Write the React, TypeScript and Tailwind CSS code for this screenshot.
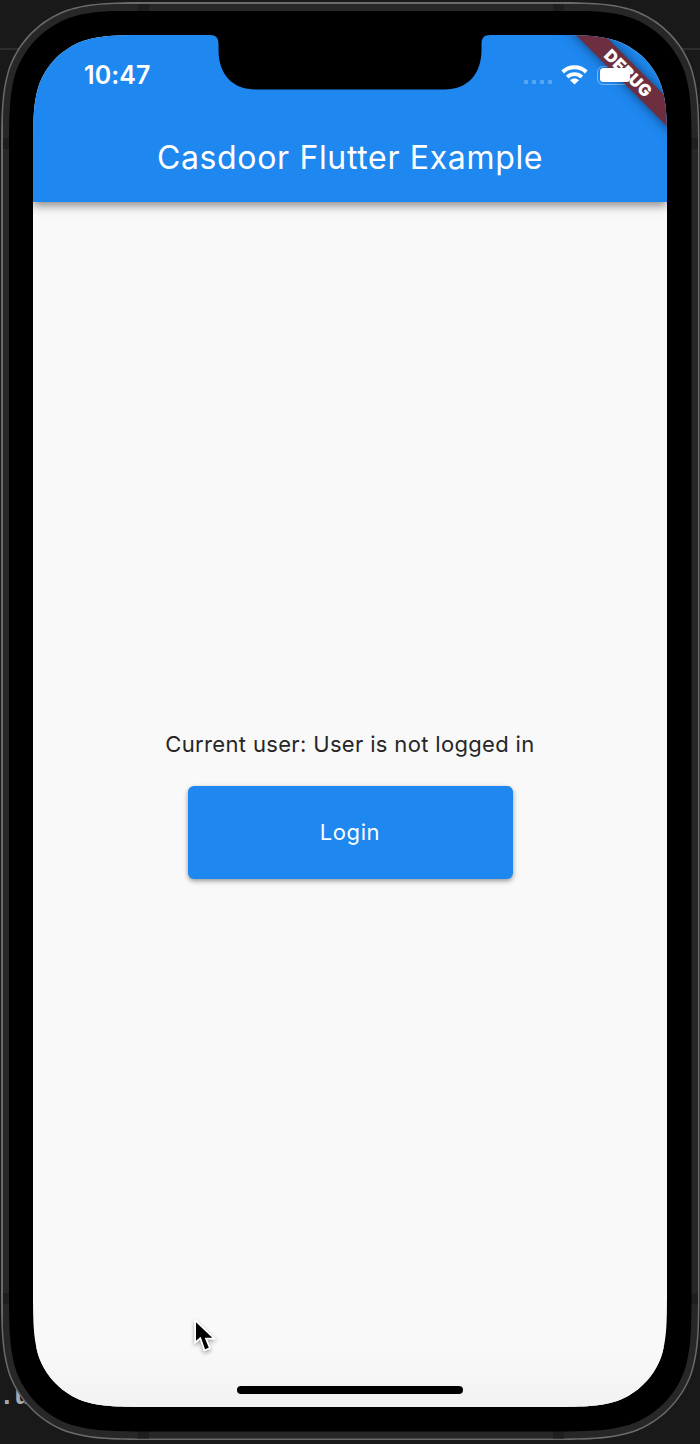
import React from "react";

/** Continuous-curvature rounded rectangle, returned as a CSS clip path. */
function smoothRect(w: number, h: number, r: number): string {
  const a = 1.528665 * r;
  const b = 1.088493 * r;
  const c = 0.868407 * r;
  const d = 0.631494 * r;
  const e = 0.074911 * r;
  const f = 0.372824 * r;
  const g = 0.169059 * r;
  return `path("M${a} 0H${w - a}C${w - b} 0 ${w - c} 0 ${w - d} ${e}C${w - f} ${g} ${w - g} ${f} ${w - e} ${d}C${w} ${c} ${w} ${b} ${w} ${a}V${h - a}C${w} ${h - b} ${w} ${h - c} ${w - e} ${h - d}C${w - g} ${h - f} ${w - f} ${h - g} ${w - d} ${h - e}C${w - c} ${h} ${w - b} ${h} ${w - a} ${h}H${a}C${b} ${h} ${c} ${h} ${d} ${h - e}C${f} ${h - g} ${g} ${h - f} ${e} ${h - d}C0 ${h - c} 0 ${h - b} 0 ${h - a}V${a}C0 ${b} 0 ${c} ${e} ${d}C${g} ${f} ${f} ${g} ${d} ${e}C${c} 0 ${b} 0 ${a} 0Z")`;
}

function Notch() {
  return (
    <svg className="absolute left-[177px] top-0" width="280" height="56" viewBox="0 0 280 56">
      <path
        d="M0 0C6 0 8.5 3 8.5 9V15C8.500 39 22 54.500 46 54.500H234C258 54.500 271.500 39 271.500 15V9C271.500 3 274 0 280 0Z"
        fill="#000"
      />
    </svg>
  );
}

function StatusBar() {
  return (
    <div className="flex h-[80px] items-center justify-between pl-[51px]">
      <span className="mt-[1px] text-[25px] font-semibold leading-none tracking-[0.1px]">10:47</span>
      <div className="flex items-center pr-[33px]">
        <div className="mr-[9px] mt-[13px] flex gap-[4px]">
          <i className="size-[4px] rounded-[1px] bg-white/25" />
          <i className="size-[4px] rounded-[1px] bg-white/25" />
          <i className="size-[4px] rounded-[1px] bg-white/25" />
          <i className="size-[4px] rounded-[1px] bg-white/25" />
        </div>
        <svg width="27" height="20" viewBox="0 0 27 20" fill="none" stroke="#fff" strokeWidth="3.9">
          <path d="M1.700 7C8.300 .7 18.700 .7 25.300 7" />
          <path d="M6.200 12C10.300 8.100 16.700 8.100 20.800 12" />
          <path d="M13.500 19.500L9 15.200C11.600 12.800 15.400 12.800 18 15.200Z" fill="#fff" stroke="none" />
        </svg>
        <div className="ml-[9px] h-[19px] w-[37px] rounded-[6px] border border-white/40" />
      </div>
    </div>
  );
}

function DebugBanner() {
  return (
    <div className="absolute left-[505px] top-[28px] flex h-[20px] w-[180px] rotate-45 items-center justify-center bg-[#6d2f40] shadow-[0_0_12px_rgba(0,0,0,0.5)]">
      <span className="pl-[1px] text-[16.5px] font-black leading-none tracking-[0.4px]">DEBUG</span>
    </div>
  );
}

function Cursor() {
  return (
    <svg
      className="absolute left-[158px] top-[1280px] drop-shadow-[0_2px_2px_rgba(0,0,0,0.35)]"
      width="28"
      height="40"
      viewBox="0 0 28 40"
    >
      <path
        d="M5 7.300V25.800L9.700 21.800L14 34.300L17.800 32.700L13.700 22.800H21.300Z"
        fill="#000"
        stroke="#fff"
        strokeWidth="3.4"
        paintOrder="stroke"
      />
    </svg>
  );
}

function Screen() {
  return (
    <div
      className="relative flex h-[1372px] w-[634px] flex-col bg-[#f9f9f9]"
      style={{ clipPath: smoothRect(634, 1372, 79) }}
    >
      <header className="relative z-10 h-[167px] shrink-0 bg-[#1e88f0] text-white shadow-[0_3px_10px_rgba(0,0,0,0.5)]">
        <StatusBar />
        <h1 className="mt-[23px] whitespace-nowrap text-center text-[32px] font-normal leading-[40px] tracking-[0.66px]">
          Casdoor Flutter Example
        </h1>
        <Notch />
        <DebugBanner />
        <div className="absolute left-[566.5px] top-[32.5px] h-[14.5px] w-[30.5px] rounded-[3.5px] bg-white" />
      </header>
      <main className="flex grow flex-col items-center pt-[527px]">
        <p className="whitespace-nowrap text-[22px] leading-[30px] tracking-[0.34px] text-[#262626]">
          Current user: User is not logged in
        </p>
        <button className="mt-[27px] h-[93px] w-[325px] rounded-[6px] bg-[#1e88f0] text-[22px] tracking-[0.6px] text-white shadow-[0_2px_5px_rgba(0,0,0,0.4)]">
          Login
        </button>
      </main>
      <footer className="flex h-[60px] shrink-0 items-end justify-center bg-linear-to-b from-[#f9f9f9] to-[#f2f2f2] pb-[13px]">
        <div className="h-[8px] w-[226px] rounded-full bg-black" />
      </footer>
      <Cursor />
    </div>
  );
}

export default function App() {
  return (
    <div className="relative h-[1444px] w-[700px] overflow-hidden bg-[#191919] font-['Inter',sans-serif]">
      <div className="absolute left-0 top-[48px] h-[2px] w-full bg-[#2d2d2d]" />
      <span className="absolute left-[-1px] top-[1381px] font-['Liberation_Mono',monospace] text-[26px] font-bold leading-[32px] text-[#aaa]">
        .u
      </span>
      <div className="relative ml-[1px] mt-[2px] w-[698.5px]">
        <div
          className="h-[1438px] bg-[#6b6b6b] p-[1.5px]"
          style={{ clipPath: smoothRect(698.5, 1438, 104) }}
        >
          <div
            className="relative h-[1435px] bg-[#272727] px-[6.5px] py-[7px]"
            style={{ clipPath: smoothRect(695.5, 1435, 102.5) }}
          >
            <i className="absolute left-[135px] top-0 h-full w-[11px] bg-[#1e1e1e]" />
            <i className="absolute left-[550px] top-0 h-full w-[11px] bg-[#1e1e1e]" />
            <i className="absolute left-0 top-[134px] h-[11px] w-full bg-[#1e1e1e]" />
            <i className="absolute left-0 top-[1289px] h-[11px] w-full bg-[#1e1e1e]" />
            <div
              className="relative h-[1421px] bg-black pl-[24px] pt-[24.5px]"
              style={{ clipPath: smoothRect(682.5, 1421, 96) }}
            >
              <Screen />
            </div>
          </div>
        </div>
      </div>
    </div>
  );
}
